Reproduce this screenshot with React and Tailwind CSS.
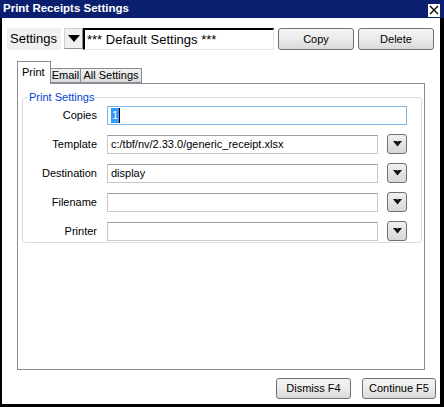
import React from "react";

const Button = ({ children, className = "" }) => (
  <button
    className={`flex items-center justify-center rounded-[3px] border border-[#707070] bg-gradient-to-b from-[#f4f4f4] via-[#ebebeb] to-[#d9d9d9] text-[11px] text-black ${className}`}
  >
    {children}
  </button>
);

const DropButton = () => (
  <div className="ml-[9px] flex h-[20px] w-[20px] items-center justify-center rounded-[3px] border border-[#707070] bg-gradient-to-b from-[#f0f0f0] to-[#d8d8d8]">
    <svg width="9" height="6" viewBox="0 0 9 6">
      <path d="M0 0h9L4.5 5.5z" fill="#111" />
      <path d="M4 0h1v1H4z" fill="#999" />
    </svg>
  </div>
);

const Field = ({ label, value, wide, focused, drop }) => (
  <div className="flex h-[20px] items-center">
    <span className="w-[74px] text-right text-[11px] text-black">{label}</span>
    <div
      className={`ml-[10px] flex h-[19px] items-center border px-[3px] text-[11px] text-black ${
        wide ? "w-[300px]" : "w-[271px]"
      } ${focused ? "border-[#7eb4ea]" : "border-[#c8c8c8] border-t-[#a0a0a0]"}`}
    >
      {focused ? (
        <span className="flex h-[15px] items-center border-r border-black bg-[#3399ff] px-[1px] text-white">1</span>
      ) : (
        value
      )}
    </div>
    {drop && <DropButton />}
  </div>
);

export default function App() {
  return (
    <div className="flex h-[407px] w-[444px] flex-col bg-black font-['Liberation_Sans',Arial,sans-serif]">
      <div className="flex h-[18px] shrink-0 items-center justify-between bg-[#0a1f6e] pl-[3px] pr-[4px]">
        <span className="text-[11.5px] font-bold text-white">Print Receipts Settings</span>
        <div className="mt-[2px] flex h-[13px] w-[12px] items-center justify-center bg-white">
          <svg width="10" height="10" viewBox="0 0 10 10">
            <path d="M1 1L9 9M9 1L1 9" stroke="#000" strokeWidth="1.3" />
          </svg>
        </div>
      </div>

      <div className="flex flex-1 flex-col border-b-[3px] border-l-2 border-r-4 border-black bg-white">
        <div className="mt-[10px] flex h-[22px] items-start pl-[5px]">
          <div className="flex h-[22px] w-[54px] items-center bg-[#f0f0f0] pl-[3px] text-[13px] text-black">
            Settings
          </div>
          <div className="ml-[3px] flex h-[21px] w-[19px] items-center justify-center border border-[#d0d0d0] border-b-[#909090] border-r-[#909090] bg-[#f0f0f0]">
            <svg width="12" height="7" viewBox="0 0 12 7">
              <path d="M0 0h12L6 7z" fill="#000" />
            </svg>
          </div>
          <div className="flex h-[22px] w-[191px] items-center border-l-2 border-t-2 border-black border-r border-b border-r-[#e8e8e8] border-b-[#e8e8e8] pl-[2px] text-[13px] text-black">
            *** Default Settings ***
          </div>
          <Button className="ml-[4px] h-[22px] w-[76px]">Copy</Button>
          <Button className="ml-[4px] h-[22px] w-[76px]">Delete</Button>
        </div>

        <div className="mt-[11px] flex h-[22px] items-end pl-[15px]">
          <div className="relative z-10 -mb-px flex h-[23px] w-[34px] items-start border border-b-0 border-[#898c95] bg-white pl-[4px] pt-[2px] text-[11px] text-black">
            Print
          </div>
          <div className="flex h-[15px] w-[30px] items-center justify-center border border-l-0 border-[#898c95] bg-gradient-to-b from-[#f2f2f2] to-[#dadada] text-[11px] text-black">
            Email
          </div>
          <div className="flex h-[15px] w-[61px] items-center justify-center border border-l-0 border-[#898c95] bg-gradient-to-b from-[#f2f2f2] to-[#dadada] text-[11px] text-black">
            All Settings
          </div>
        </div>

        <div className="ml-[15px] h-[287px] w-[408px] border border-[#898c95] bg-white">
          <fieldset className="ml-[4px] mt-[7px] w-[400px] rounded-[3px] border border-[#d5dfe5] pb-[1px]">
            <legend className="ml-[5px] px-[1px] text-[11px] leading-[13px] text-[#0046d5]">
              Print Settings
            </legend>
            <div className="flex flex-col gap-[9px] pt-[1px]">
              <Field label="Copies" wide focused />
              <Field label="Template" value="c:/tbf/nv/2.33.0/generic_receipt.xlsx" drop />
              <Field label="Destination" value="display" drop />
              <Field label="Filename" value="" drop />
              <Field label="Printer" value="" drop />
            </div>
          </fieldset>
        </div>

        <div className="mt-[8px] flex justify-end gap-[11px] pr-[4px]">
          <Button className="h-[21px] w-[75px]">Dismiss F4</Button>
          <Button className="h-[21px] w-[74px]">Continue F5</Button>
        </div>
      </div>
    </div>
  );
}
